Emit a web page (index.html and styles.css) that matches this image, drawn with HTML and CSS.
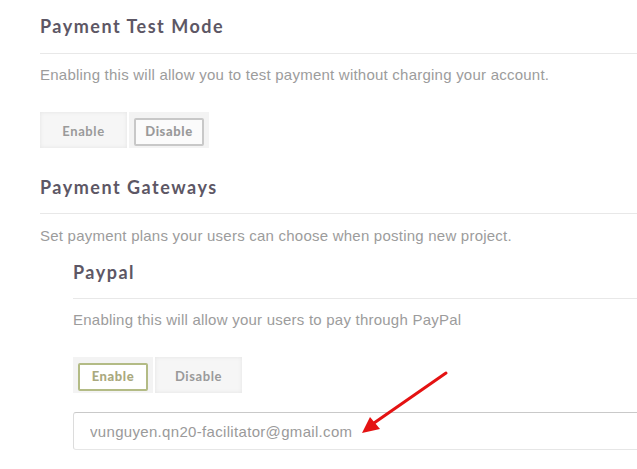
FILE: index.html
```html
<!DOCTYPE html>
<html lang="en">
<head>
	<meta charset="utf-8">
	<title>Payment settings</title>
	<link rel="stylesheet" href="styles.css">
</head>

<body>
	<div id="wrapper">
		<section class="ajuste">
			<h2>Payment Test Mode</h2>
			<p class="desc">Enabling this will allow you to test payment without charging your account.</p>
			<div class="switch">
				<span class="opcion">Enable</span>
				<span class="opcion activa"><b>Disable</b></span>
			</div>
		</section>

		<section class="ajuste">
			<h2>Payment Gateways</h2>
			<p class="desc">Set payment plans your users can choose when posting new project.</p>

			<div class="pasarela">
				<h3>Paypal</h3>
				<p class="desc">Enabling this will allow your users to pay through PayPal</p>
				<div class="switch">
					<span class="opcion activa verde"><b>Enable</b></span>
					<span class="opcion">Disable</span>
				</div>
				<input type="text" class="email" value="vunguyen.qn20-facilitator@gmail.com" />
			</div>
		</section>

		<svg class="flecha" width="100" height="80" viewBox="0 0 100 80">
			<line x1="86" y1="12" x2="14" y2="62" stroke="#e41212" stroke-width="3" stroke-linecap="round" />
			<polygon points="2,72 10,56 20,68" fill="#e41212" />
		</svg>
	</div>
</body>
</html>
```

FILE: styles.css
```css
*{
	margin: 0px;
	padding: 0px;
	box-sizing: border-box;
}
body{
	background-color: #FFF;
	font-family: "Liberation Sans", Arial, sans-serif;
	overflow: hidden;
}
#wrapper{
	position: relative;
	padding: 14px 0px 0px 40px;
}
.ajuste h2, .pasarela h3{
	font-family: Lato, "Open Sans", sans-serif;
	font-weight: 700;
	font-size: 18px;
	line-height: 24px;
	letter-spacing: 1.5px;
	color: #5d5765;
	padding-bottom: 15px;
	border-bottom: 1px solid #e8e8e8;
}
.ajuste + .ajuste{
	margin-top: 27px;
}
.ajuste + .ajuste h2{
	padding-bottom: 14px;
}
.desc{
	font-size: 15px;
	line-height: 20px;
	letter-spacing: 0.23px;
	color: #9c9c9c;
	margin-top: 11px;
}
.ajuste + .ajuste > .desc{
	margin-top: 12px;
}
.switch{
	display: flex;
	gap: 2px;
	margin-top: 27px;
	height: 36px;
}
.opcion{
	display: flex;
	align-items: center;
	justify-content: center;
	width: 87px;
	background-color: #f6f6f6;
	box-shadow: inset 0px 0px 4px #e4e4e4;
	font-family: Lato, sans-serif;
	font-weight: 700;
	font-size: 13px;
	letter-spacing: 0.6px;
	color: #9a9a9a;
	padding-top: 2px;
}
.opcion.activa{
	width: 80px;
	padding: 6px 5px 2px 5px;
	box-shadow: none;
	background-color: #f3f3f3;
}
.opcion b{
	display: flex;
	align-items: center;
	justify-content: center;
	width: 70px;
	height: 28px;
	border: 2px solid #c8c8c8;
	border-radius: 2px;
	background-color: #fbfbfb;
	padding-bottom: 3px;
}
.opcion.verde b{
	border-color: #b3bb85;
	color: #aaa97e;
	background-color: #fff;
}
.pasarela{
	margin-left: 33px;
	margin-top: 14px;
}
.pasarela h3{
	padding-bottom: 14px;
}
.email{
	display: block;
	width: 100%;
	height: 38px;
	margin-top: 19px;
	border: 1px solid #dcdcdc;
	border-right: none;
	border-top-color: #c9c9c9;
	border-bottom-color: #e6e6e6;
	border-radius: 3px 0px 0px 3px;
	padding: 0px 16px;
	font-family: "Liberation Sans", Arial, sans-serif;
	font-size: 15px;
	letter-spacing: 0.32px;
	color: #9a9a9a;
	outline: none;
}
.flecha{
	position: absolute;
	left: 360px;
	top: 361px;
}
```
